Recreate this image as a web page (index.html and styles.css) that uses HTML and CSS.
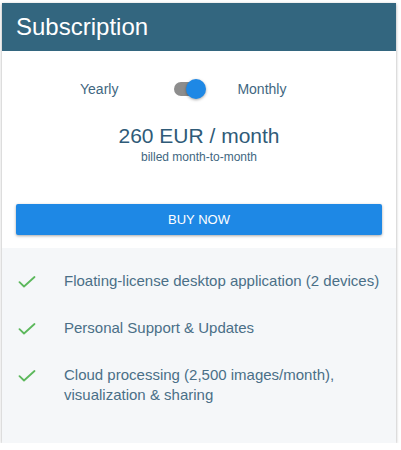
FILE: index.html
```html
<!DOCTYPE html>
<html>
<head>
<meta charset="utf-8">
<link rel="stylesheet" href="styles.css">
</head>
<body>
<div class="card">
  <div class="card-header">Subscription</div>
  <div class="card-top">
    <div class="period-row">
      <span class="period yearly">Yearly</span>
      <span class="switch"><span class="track"></span><span class="knob"></span></span>
      <span class="period monthly">Monthly</span>
    </div>
    <div class="price">260 EUR / month</div>
    <div class="billing">billed month-to-month</div>
    <button class="buy">BUY NOW</button>
  </div>
  <ul class="features">
    <li class="feature">
      <svg class="check" viewBox="0 0 18 12" width="18" height="12"><path d="M1.5 6.2 L6 10.5 L16.5 1" fill="none" stroke="#5cb85c" stroke-width="1.8" stroke-linecap="round" stroke-linejoin="round"/></svg>
      <span class="feature-text">Floating-license desktop application (2 devices)</span>
    </li>
    <li class="feature">
      <svg class="check" viewBox="0 0 18 12" width="18" height="12"><path d="M1.5 6.2 L6 10.5 L16.5 1" fill="none" stroke="#5cb85c" stroke-width="1.8" stroke-linecap="round" stroke-linejoin="round"/></svg>
      <span class="feature-text">Personal Support &amp; Updates</span>
    </li>
    <li class="feature">
      <svg class="check" viewBox="0 0 18 12" width="18" height="12"><path d="M1.5 6.2 L6 10.5 L16.5 1" fill="none" stroke="#5cb85c" stroke-width="1.8" stroke-linecap="round" stroke-linejoin="round"/></svg>
      <span class="feature-text">Cloud processing (2,500 images/month),<br>visualization &amp; sharing</span>
    </li>
  </ul>
</div>
</body>
</html>
```

FILE: styles.css
```css
* { box-sizing: border-box; }
body {
  margin: 0;
  background: #ffffff;
  font-family: "Liberation Sans", Arial, sans-serif;
}
.card {
  margin: 3px 0 0 2px;
  width: 394px;
  background: #ffffff;
  box-shadow: 0 1px 3px rgba(0,0,0,0.35);
}
.card-header {
  height: 48px;
  background: #33667f;
  color: #ffffff;
  font-size: 24px;
  line-height: 48px;
  padding-left: 14px;
}
.card-top {
  padding: 26px 14px 13px;
}
.period-row {
  display: flex;
  align-items: center;
  height: 24px;
  padding-left: 64px;
}
.period {
  color: #3f6781;
  font-size: 14px;
}
.switch {
  position: relative;
  width: 34px;
  height: 24px;
  margin-left: 56px;
  margin-right: 29px;
}
.track {
  position: absolute;
  left: 0;
  top: 5px;
  width: 30px;
  height: 14px;
  border-radius: 7px;
  background: #8d8d8d;
}
.knob {
  position: absolute;
  left: 12px;
  top: 2px;
  width: 20px;
  height: 20px;
  border-radius: 50%;
  background: #1e88e5;
  box-shadow: 0 1px 3px rgba(0,0,0,0.35);
}
.price {
  margin-top: 22px;
  text-align: center;
  color: #2f5b78;
  font-size: 21px;
  line-height: 26px;
}
.billing {
  text-align: center;
  color: #3f6781;
  font-size: 12px;
  line-height: 16px;
}
.buy {
  display: block;
  width: 100%;
  height: 31px;
  margin-top: 39px;
  border: none;
  border-radius: 2px;
  background: #1e88e5;
  color: #ffffff;
  font-family: "Liberation Sans", Arial, sans-serif;
  font-size: 13px;
  box-shadow: 0 1px 3px rgba(0,0,0,0.35);
}
.features {
  list-style: none;
  margin: 0;
  padding: 23px 4px 38px 16px;
  background: #f5f7f9;
}
.feature {
  display: flex;
  align-items: flex-start;
  color: #4a6f87;
  font-size: 15px;
  line-height: 20px;
}
.feature + .feature {
  margin-top: 27px;
}
.check {
  flex: none;
  margin-top: 5px;
  margin-right: 28px;
}
```
